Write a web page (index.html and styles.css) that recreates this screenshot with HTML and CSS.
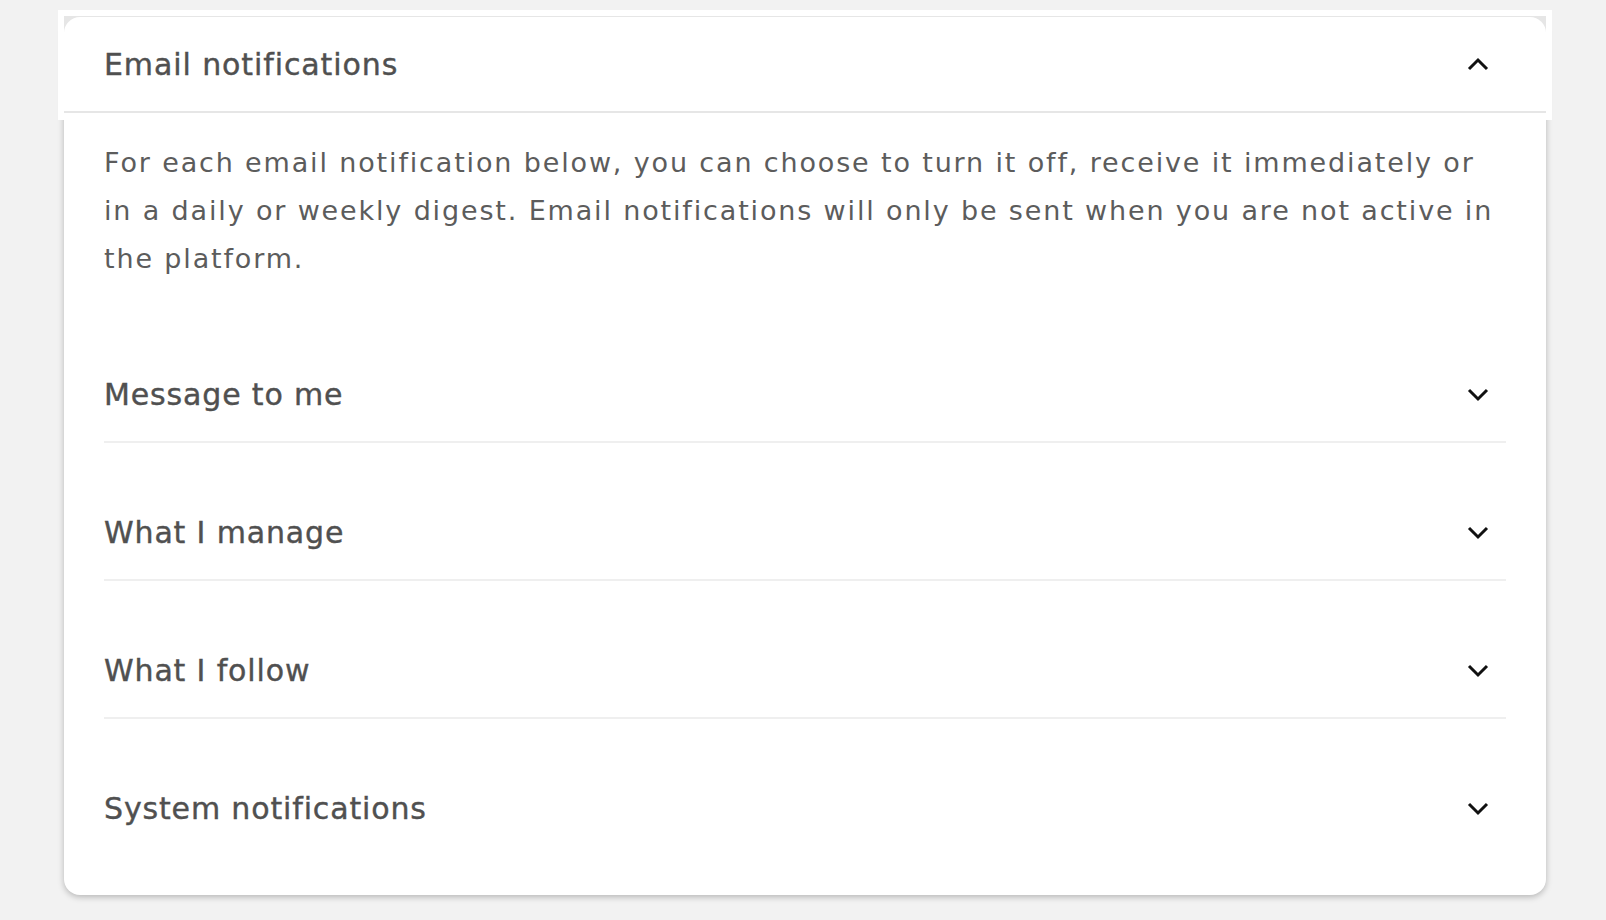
FILE: index.html
```html
<!DOCTYPE html>
<html lang="en">
<head>
  <meta charset="UTF-8" />
  <meta name="viewport" content="width=device-width, initial-scale=1.0"/>
  <title>Notification settings</title>
  <link rel="stylesheet" href="styles.css">
</head>
<body>

  <section class="card">
    <div class="card-top">
      <div class="card-head-frame">
        <div class="card-head">
          <h2 class="card-title">Email notifications</h2>
          <svg class="chevron" width="22" height="14" viewBox="0 0 22 14">
            <polyline points="2,12 11,3 20,12" />
          </svg>
        </div>
      </div>
    </div>

    <div class="card-body">
      <p class="intro">For each email notification below, you can choose to turn it off, receive it immediately or in a daily or weekly digest. Email notifications will only be sent when you are not active in the platform.</p>

      <details class="topic">
        <summary>
          <span>Message to me</span>
          <svg class="chevron" width="22" height="14" viewBox="0 0 22 14"><polyline points="2,2 11,11 20,2" /></svg>
        </summary>
      </details>

      <details class="topic">
        <summary>
          <span>What I manage</span>
          <svg class="chevron" width="22" height="14" viewBox="0 0 22 14"><polyline points="2,2 11,11 20,2" /></svg>
        </summary>
      </details>

      <details class="topic">
        <summary>
          <span>What I follow</span>
          <svg class="chevron" width="22" height="14" viewBox="0 0 22 14"><polyline points="2,2 11,11 20,2" /></svg>
        </summary>
      </details>

      <details class="topic">
        <summary>
          <span>System notifications</span>
          <svg class="chevron" width="22" height="14" viewBox="0 0 22 14"><polyline points="2,2 11,11 20,2" /></svg>
        </summary>
      </details>
    </div>
  </section>

</body>
</html>
```

FILE: styles.css
```css
* {
  box-sizing: border-box;
  margin: 0;
  padding: 0;
}

body {
  background: #f2f2f2;
  font-family: 'DejaVu Sans', 'Noto Sans', sans-serif;
  color: #505050;
  padding: 16px 60px 24px 64px;
}

.card {
  display: flex;
  flex-direction: column;
  background: #fff;
  border-radius: 16px;
  box-shadow: 0 2px 6px rgba(0,0,0,0.25);
}

/* white strip over the top of the card */
.card-top {
  position: relative;
  z-index: 1;
  background: #fff;
  margin: -6px -6px 0;
  padding: 6px 6px 7px;
}

.card-head-frame {
  background: #e6e6e6;
  padding-top: 1px;
}

.card-head {
  display: flex;
  align-items: center;
  justify-content: space-between;
  height: 96px;
  padding: 0 57px 0 40px;
  background: #fff;
  border-radius: 16px 16px 0 0;
  border-bottom: 2px solid #e6e6e6;
}

.card-title {
  font-size: 30px;
  font-weight: 400;
  letter-spacing: 0.9px;
  -webkit-text-stroke: 0.4px currentColor;
}

.chevron {
  flex: 0 0 auto;
  fill: none;
  stroke: #111;
  stroke-width: 3;
}

.card-body {
  padding: 19px 40px 40px;
}

.intro {
  font-size: 27px;
  font-weight: 400;
  line-height: 48px;
  letter-spacing: 1.85px;
  color: #5c5c5c;
  margin-bottom: 22px;
}

.topic {
  border-bottom: 2px solid #efefef;
}

.topic:last-child {
  border-bottom: none;
}

.topic summary {
  display: flex;
  align-items: center;
  justify-content: space-between;
  padding: 70px 17px 26px 0;
  font-size: 30px;
  line-height: 40px;
  letter-spacing: 0.85px;
  -webkit-text-stroke: 0.4px currentColor;
  list-style: none;
  cursor: pointer;
}

.topic summary::-webkit-details-marker {
  display: none;
}

.topic[open] .chevron {
  transform: rotate(180deg);
}
```
